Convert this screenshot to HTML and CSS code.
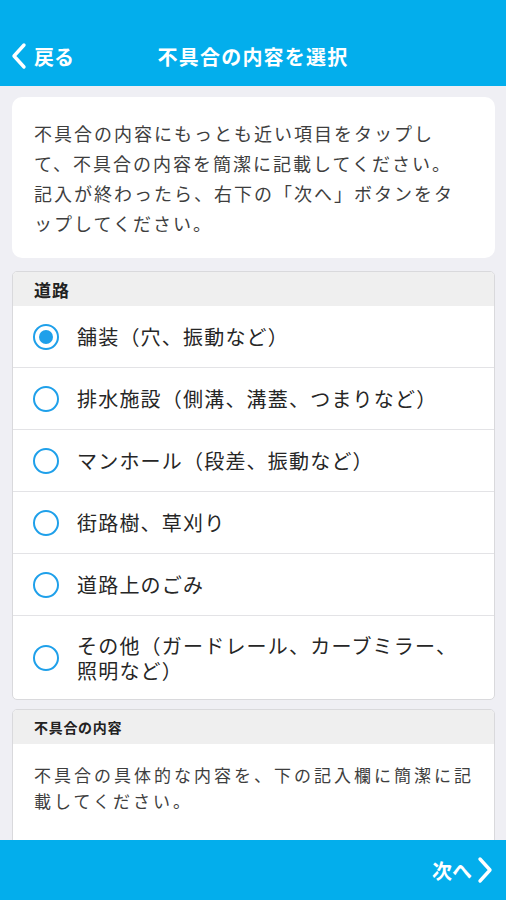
FILE: index.html
```html
<!DOCTYPE html>
<html lang="ja">
<head>
    <meta charset="UTF-8">
    <meta name="viewport" content="width=device-width, initial-scale=1.0">
    <title>不具合の内容を選択</title>
    <link rel="stylesheet" href="styles.css">
</head>
<body>
<div class="screen">

    <header class="topbar">
        <a class="back" href="#">
            <svg width="18" height="28" viewBox="0 0 18 28"><path d="M14 3 L4 14 L14 25" fill="none" stroke="#fff" stroke-width="3.4" stroke-linecap="round" stroke-linejoin="round"/></svg>
            <span>戻る</span>
        </a>
        <h1>不具合の内容を選択</h1>
    </header>

    <main class="content">
        <div class="intro">
            不具合の内容にもっとも近い項目をタップして、不具合の内容を簡潔に記載してください。記入が終わったら、右下の「次へ」ボタンをタップしてください。
        </div>

        <section class="card">
            <div class="card-head">道路</div>
            <ul class="options">
                <li class="option selected">
                    <span class="radio"></span>
                    <span class="label">舗装（穴、振動など）</span>
                </li>
                <li class="option">
                    <span class="radio"></span>
                    <span class="label">排水施設（側溝、溝蓋、つまりなど）</span>
                </li>
                <li class="option">
                    <span class="radio"></span>
                    <span class="label">マンホール（段差、振動など）</span>
                </li>
                <li class="option">
                    <span class="radio"></span>
                    <span class="label">街路樹、草刈り</span>
                </li>
                <li class="option">
                    <span class="radio"></span>
                    <span class="label">道路上のごみ</span>
                </li>
                <li class="option">
                    <span class="radio"></span>
                    <span class="label">その他（ガードレール、カーブミラー、照明など）</span>
                </li>
            </ul>
        </section>

        <section class="card">
            <div class="card-head small">不具合の内容</div>
            <p class="note">不具合の具体的な内容を、下の記入欄に簡潔に記載してください。</p>
        </section>
    </main>

    <footer class="bottombar">
        <a class="next" href="#">
            <span>次へ</span>
            <svg width="18" height="28" viewBox="0 0 18 28"><path d="M4 3 L14 14 L4 25" fill="none" stroke="#fff" stroke-width="3.4" stroke-linecap="round" stroke-linejoin="round"/></svg>
        </a>
    </footer>

</div>
</body>
</html>
```

FILE: styles.css
```css
* { box-sizing: border-box; }
body { margin: 0; font-family: "Noto Sans CJK JP", "Noto Sans", sans-serif; background: #efeff4; color: #333; }
.screen { width: 506px; height: 900px; display: flex; flex-direction: column; overflow: hidden; }

.topbar { height: 86px; flex: none; background: #03aeec; padding-top: 27px; display: flex; align-items: center; position: relative; color: #fff; }
.topbar h1 { margin: 0; width: 100%; text-align: center; font-size: 20px; font-weight: 700; letter-spacing: 1.2px; }
.back { position: absolute; left: 10px; top: 27px; height: 58px; display: flex; align-items: center; gap: 6px; color: #fff; text-decoration: none; font-size: 20px; font-weight: 700; }

.content { flex: 1; overflow: hidden; padding: 11px 11px 0 12px; }
.intro { background: #fff; border-radius: 10px; padding: 21px 24px 20px 22px; font-size: 18px; line-height: 30px; letter-spacing: 2px; color: #3e3e3e; }

.card { background: #fff; border: 1px solid #d9d9dc; border-radius: 5px; overflow: hidden; margin-top: 13px; }
.card + .card { margin-top: 9px; }
.card-head { height: 34px; background: #efefef; padding-left: 21px; display: flex; align-items: center; font-size: 17px; font-weight: 700; letter-spacing: 1px; color: #222; }
.card-head.small { font-size: 14px; letter-spacing: 0.7px; }

.options { list-style: none; margin: 0; padding: 0; }
.option { display: flex; align-items: center; gap: 18px; height: 62px; padding: 0 20px; border-bottom: 1px solid #e3e3e6; font-size: 20px; line-height: 25px; letter-spacing: 1.2px; color: #262626; }
.option:last-child { border-bottom: none; height: 83px; }
.radio { flex: none; width: 26px; height: 26px; border: 2.4px solid #1fa0ea; border-radius: 50%; display: flex; align-items: center; justify-content: center; }
.selected .radio::after { content: ""; width: 14px; height: 14px; border-radius: 50%; background: #1fa0ea; }

.note { margin: 0; padding: 18px 14px 40px 21px; font-size: 17px; line-height: 26px; letter-spacing: 3px; color: #3e3e3e; }

.bottombar { height: 60px; flex: none; background: #03aeec; display: flex; justify-content: flex-end; align-items: center; padding-right: 12px; }
.next { display: flex; align-items: center; gap: 4px; color: #fff; text-decoration: none; font-size: 20px; font-weight: 700; }
```
